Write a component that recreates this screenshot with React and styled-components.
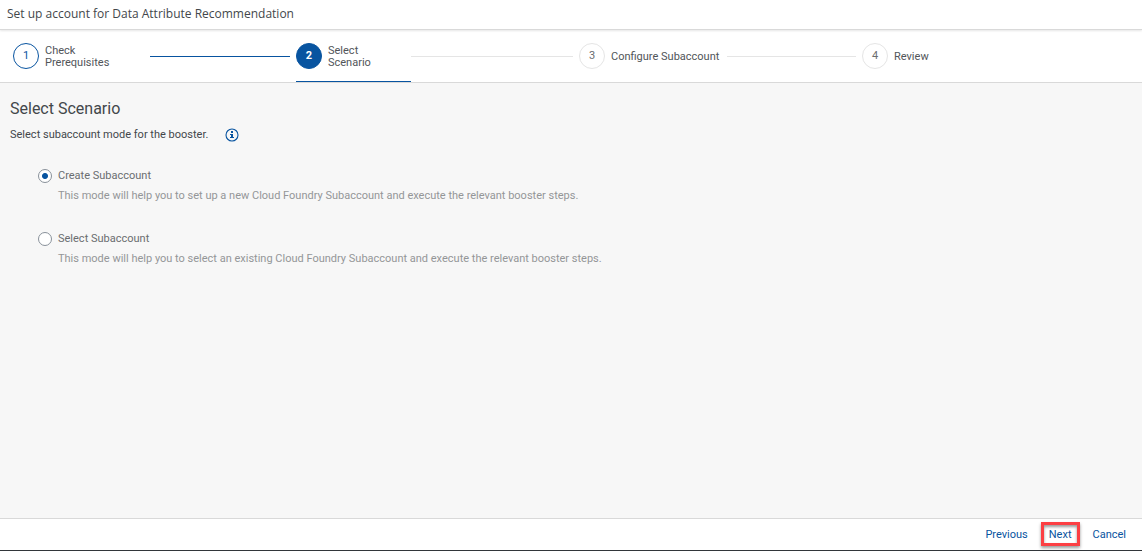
import React, { useState } from "react";
import styled, { createGlobalStyle, css } from "styled-components";

const blue = "#0854a0";

const GlobalStyle = createGlobalStyle`
  * { box-sizing: border-box; }
  body {
    margin: 0;
    background: #f7f7f7;
    color: #43474b;
    font-family: Roboto, "Liberation Sans", sans-serif;
    font-size: 11px;
  }
`;

const Page = styled.div`
  display: flex;
  flex-direction: column;
  min-height: 100vh;
`;

const TitleBar = styled.header`
  padding: 4px 7px 5px;
  background: #fff;
  border-bottom: 1px solid #d9d9d9;
  box-shadow: 0 1px 2px rgba(0, 0, 0, 0.1);
  z-index: 1;
`;

const Title = styled.h1`
  margin: 0;
  font-family: "Open Sans", Roboto, sans-serif;
  font-size: 12px;
  line-height: 20px;
  font-weight: 400;
`;

const Steps = styled.ol`
  display: grid;
  grid-template-columns: repeat(3, 1fr) 280px;
  height: 53px;
  margin: 0;
  padding: 0 0 0 13px;
  list-style: none;
  background: #fff;
  border-bottom: 1px solid #d9d9d9;
`;

const Step = styled.li`
  display: flex;
  align-items: center;
  padding-right: 6px;
`;

const StepBody = styled.div`
  display: flex;
  align-items: center;
  gap: 6px;
  height: 100%;
  width: ${(p) => p.$width};
  flex-shrink: 0;
  border-bottom: 1px solid ${(p) => (p.$active ? blue : "transparent")};
`;

const StepNumber = styled.span`
  display: grid;
  place-items: center;
  width: 26px;
  height: 26px;
  flex-shrink: 0;
  border: 1px solid #e5e5e5;
  border-radius: 50%;
  line-height: 16px;
  color: #6a6d70;
  ${(p) => p.$state === "done" && css`
    border-color: ${blue};
    color: ${blue};
  `}
  ${(p) => p.$state === "active" && css`
    border-color: ${blue};
    background: ${blue};
    color: #fff;
    font-weight: 700;
  `}
`;

const StepLabel = styled.span`
  max-width: ${(p) => (p.$wrap ? "70px" : "none")};
  padding-top: 2px;
  line-height: 12px;
  color: #515559;
`;

const StepLine = styled.span`
  flex: 1;
  height: 1px;
  background: ${(p) => (p.$done ? blue : "#e5e5e5")};
`;

const Content = styled.main`
  flex: 1;
  padding: 16px 10px;
`;

const Heading = styled.h2`
  margin: 0;
  font-size: 16px;
  line-height: 20px;
  font-weight: 400;
`;

const Intro = styled.div`
  display: flex;
  align-items: center;
  gap: 17px;
  margin-top: 8px;
  line-height: 16px;
`;

const InfoButton = styled.button`
  display: flex;
  padding: 0;
  border: 0;
  background: none;
`;

const Options = styled.div`
  display: grid;
  gap: 27px;
  margin: 25px 28px 0;
`;

const Option = styled.div`
  display: grid;
  grid-template-columns: 14px 1fr;
  column-gap: 6px;
  row-gap: 4px;
  line-height: 16px;
`;

const Radio = styled.input`
  appearance: none;
  width: 14px;
  height: 14px;
  margin: 1px 0 0;
  border: 1px solid #89919a;
  border-radius: 50%;
  background: #fff;
  &:checked {
    background: radial-gradient(circle, ${blue} 0 2.5px, #fff 3.5px);
  }
`;

const OptionLabel = styled.label`
  color: #6a6d70;
`;

const OptionText = styled.p`
  grid-column: 2;
  margin: 0;
  color: #949698;
`;

const Footer = styled.footer`
  display: flex;
  align-items: center;
  justify-content: flex-end;
  gap: 10px;
  height: 33px;
  padding: 0 13px 1px;
  background: #fff;
  border-top: 1px solid #d9d9d9;
  border-bottom: 1px solid #32363a;
`;

const Action = styled.button`
  padding: 0 ${(p) => (p.$marked ? "5px" : "3px")};
  height: 24px;
  border: ${(p) => (p.$marked ? "3px solid #fc3f43" : "0")};
  background: none;
  box-shadow: ${(p) => (p.$marked ? "0 2px 3px rgba(0,0,0,0.4), inset 0 2px 3px rgba(0,0,0,0.4)" : "none")};
  color: ${blue};
  font: inherit;
`;

const steps = [
  { label: "Check Prerequisites", state: "done", width: "137px", wrap: true },
  { label: "Select Scenario", state: "active", width: "115px", wrap: true },
  { label: "Configure Subaccount", state: "next", width: "148px" },
  { label: "Review", state: "next", width: "auto" },
];

const modes = [
  {
    id: "create",
    label: "Create Subaccount",
    text: "This mode will help you to set up a new Cloud Foundry Subaccount and execute the relevant booster steps.",
  },
  {
    id: "select",
    label: "Select Subaccount",
    text: "This mode will help you to select an existing Cloud Foundry Subaccount and execute the relevant booster steps.",
  },
];

function InfoIcon() {
  return (
    <svg width="14" height="14" viewBox="0 0 14 14" aria-hidden="true">
      <circle cx="7" cy="7" r="6" fill="none" stroke={blue} strokeWidth="1.1" />
      <path d="M6 3h2v2H6zM5 6h3v3h1v1H5V9h1V7H5z" fill={blue} />
    </svg>
  );
}

export default function App() {
  const [mode, setMode] = useState("create");
  return (
    <Page>
      <GlobalStyle />
      <TitleBar>
        <Title>Set up account for Data Attribute Recommendation</Title>
      </TitleBar>
      <Steps>
        {steps.map((s, i) => (
          <Step key={s.label} aria-current={s.state === "active" ? "step" : undefined}>
            <StepBody $width={s.width} $active={s.state === "active"}>
              <StepNumber $state={s.state}>{i + 1}</StepNumber>
              <StepLabel $wrap={s.wrap}>{s.label}</StepLabel>
            </StepBody>
            {i < steps.length - 1 && <StepLine $done={s.state === "done"} />}
          </Step>
        ))}
      </Steps>
      <Content>
        <Heading>Select Scenario</Heading>
        <Intro>
          <span>Select subaccount mode for the booster.</span>
          <InfoButton type="button" aria-label="Information">
            <InfoIcon />
          </InfoButton>
        </Intro>
        <Options role="radiogroup" aria-label="Subaccount mode">
          {modes.map((m) => (
            <Option key={m.id}>
              <Radio
                type="radio"
                name="mode"
                id={m.id}
                checked={mode === m.id}
                onChange={() => setMode(m.id)}
              />
              <OptionLabel htmlFor={m.id}>{m.label}</OptionLabel>
              <OptionText>{m.text}</OptionText>
            </Option>
          ))}
        </Options>
      </Content>
      <Footer>
        <Action type="button">Previous</Action>
        <Action type="button" $marked>Next</Action>
        <Action type="button">Cancel</Action>
      </Footer>
    </Page>
  );
}
